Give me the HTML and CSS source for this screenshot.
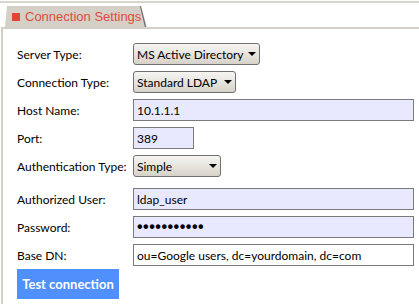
FILE: index.html
```html
<!DOCTYPE html>
<html>
<head>
<meta charset="utf-8">
<link rel="stylesheet" href="styles.css">
</head>
<body>
<div class="rule"></div>
<div class="tabrow">
  <div class="tab">
    <span class="tab-mark"></span>
    <span class="tab-title">Connection Settings</span>
    <svg class="tab-edge" width="8" height="21" viewBox="0 0 8 21"><path d="M1.5 0 L6.5 21" stroke="#6f6f6f" stroke-width="1.2" fill="none"/></svg>
  </div>
</div>
<div class="panel">
  <div class="form">
    <label class="lbl">Server Type:</label>
    <div class="field"><div class="select w-server"><span class="sel-text">MS Active Directory</span><span class="caret"></span></div></div>

    <label class="lbl">Connection Type:</label>
    <div class="field"><div class="select w-conn"><span class="sel-text">Standard LDAP</span><span class="caret"></span></div></div>

    <label class="lbl">Host Name:</label>
    <div class="field"><input class="input wide" type="text" value="10.1.1.1"></div>

    <label class="lbl">Port:</label>
    <div class="field"><input class="input port" type="text" value="389"></div>

    <label class="lbl">Authentication Type:</label>
    <div class="field"><div class="select w-auth"><span class="sel-text">Simple</span><span class="caret"></span></div></div>

    <label class="lbl lbl-gap">Authorized User:</label>
    <div class="field lbl-gap"><input class="input wide" type="text" value="ldap_user"></div>

    <label class="lbl">Password:</label>
    <div class="field"><input class="input wide pw" type="password" value="abcdefghijk"></div>

    <label class="lbl">Base DN:</label>
    <div class="field"><input class="input wide plain" type="text" value="ou=Google users, dc=yourdomain, dc=com"></div>
  </div>
  <button class="btn" type="button">Test connection</button>
</div>
</body>
</html>
```

FILE: styles.css
```css
html, body {
  margin: 0;
  padding: 0;
  background: #ffffff;
}
body {
  padding-top: 1px;
  font-family: Lato, "Noto Sans", sans-serif;
  font-size: 12px;
  color: #000;
  width: 419px;
  height: 304px;
  overflow: hidden;
  box-sizing: border-box;
}
.rule {
  height: 2px;
  background: #d8d5ce;
}
.tabrow {
  height: 21px;
  margin-top: 3px;
  padding-left: 5px;
  display: flex;
  align-items: flex-end;
}
.tab {
  position: relative;
  width: 142px;
  height: 21px;
  background: #d4d0c8;
  clip-path: polygon(2px 0, 136px 0, 142px 100%, 0 100%);
  display: flex;
  align-items: center;
  padding-left: 7px;
  box-sizing: border-box;
}
.tab-mark {
  width: 8px;
  height: 8px;
  background: #e04434;
  margin-right: 5px;
  flex: none;
}
.tab-title {
  font-family: "Liberation Sans", Arial, sans-serif;
  font-size: 13px;
  color: #e24b3b;
  white-space: nowrap;
}
.tab-edge {
  position: absolute;
  right: 0;
  top: 0;
}
.panel {
  border-top: 2px solid #d4d0c8;
  border-left: 2px solid #d4d0c8;
  margin-left: 1px;
  height: 277px;
  padding: 14px 0 0 14px;
  box-sizing: border-box;
}
.form {
  display: grid;
  grid-template-columns: 116px 1fr;
  row-gap: 6px;
  align-items: center;
}
.lbl {
  white-space: nowrap;
}
.lbl-gap {
  margin-top: 5px;
}
.field {
  display: flex;
  height: 22px;
}
.select {
  box-sizing: border-box;
  height: 22px;
  border: 1px solid #707070;
  border-radius: 3px;
  background: linear-gradient(#f6f5f2, #e6e3dc 55%, #d6d2c8);
  display: flex;
  align-items: center;
  padding: 0 3px 0 3px;
  justify-content: space-between;
}
.w-server { width: 127px; }
.w-conn { width: 103px; }
.w-auth { width: 88px; }
.sel-text {
  white-space: nowrap;
}
.caret {
  width: 0;
  height: 0;
  border-left: 4px solid transparent;
  border-right: 4px solid transparent;
  border-top: 4px solid #000;
  flex: none;
  margin-left: 4px;
}
.input {
  box-sizing: border-box;
  height: 22px;
  border: 1px solid #7a7a7a;
  background: #e8e8ff;
  font-family: inherit;
  font-size: 12px;
  padding: 0 3px;
  margin: 0;
  outline: none;
  color: #000;
}
.wide { width: 281px; }
.port { width: 61px; }
.pw {
  font-family: "Liberation Sans", Arial, sans-serif;
  font-size: 16px;
  font-weight: bold;
  letter-spacing: 0.5px;
}
.plain { background: #ffffff; }
.btn {
  margin-top: 3px;
  width: 102px;
  height: 30px;
  border: none;
  background: #4f90fc;
  color: #ffffff;
  font-family: Lato, "Noto Sans", sans-serif;
  font-weight: bold;
  font-size: 13px;
  padding: 0;
  cursor: pointer;
}
```
